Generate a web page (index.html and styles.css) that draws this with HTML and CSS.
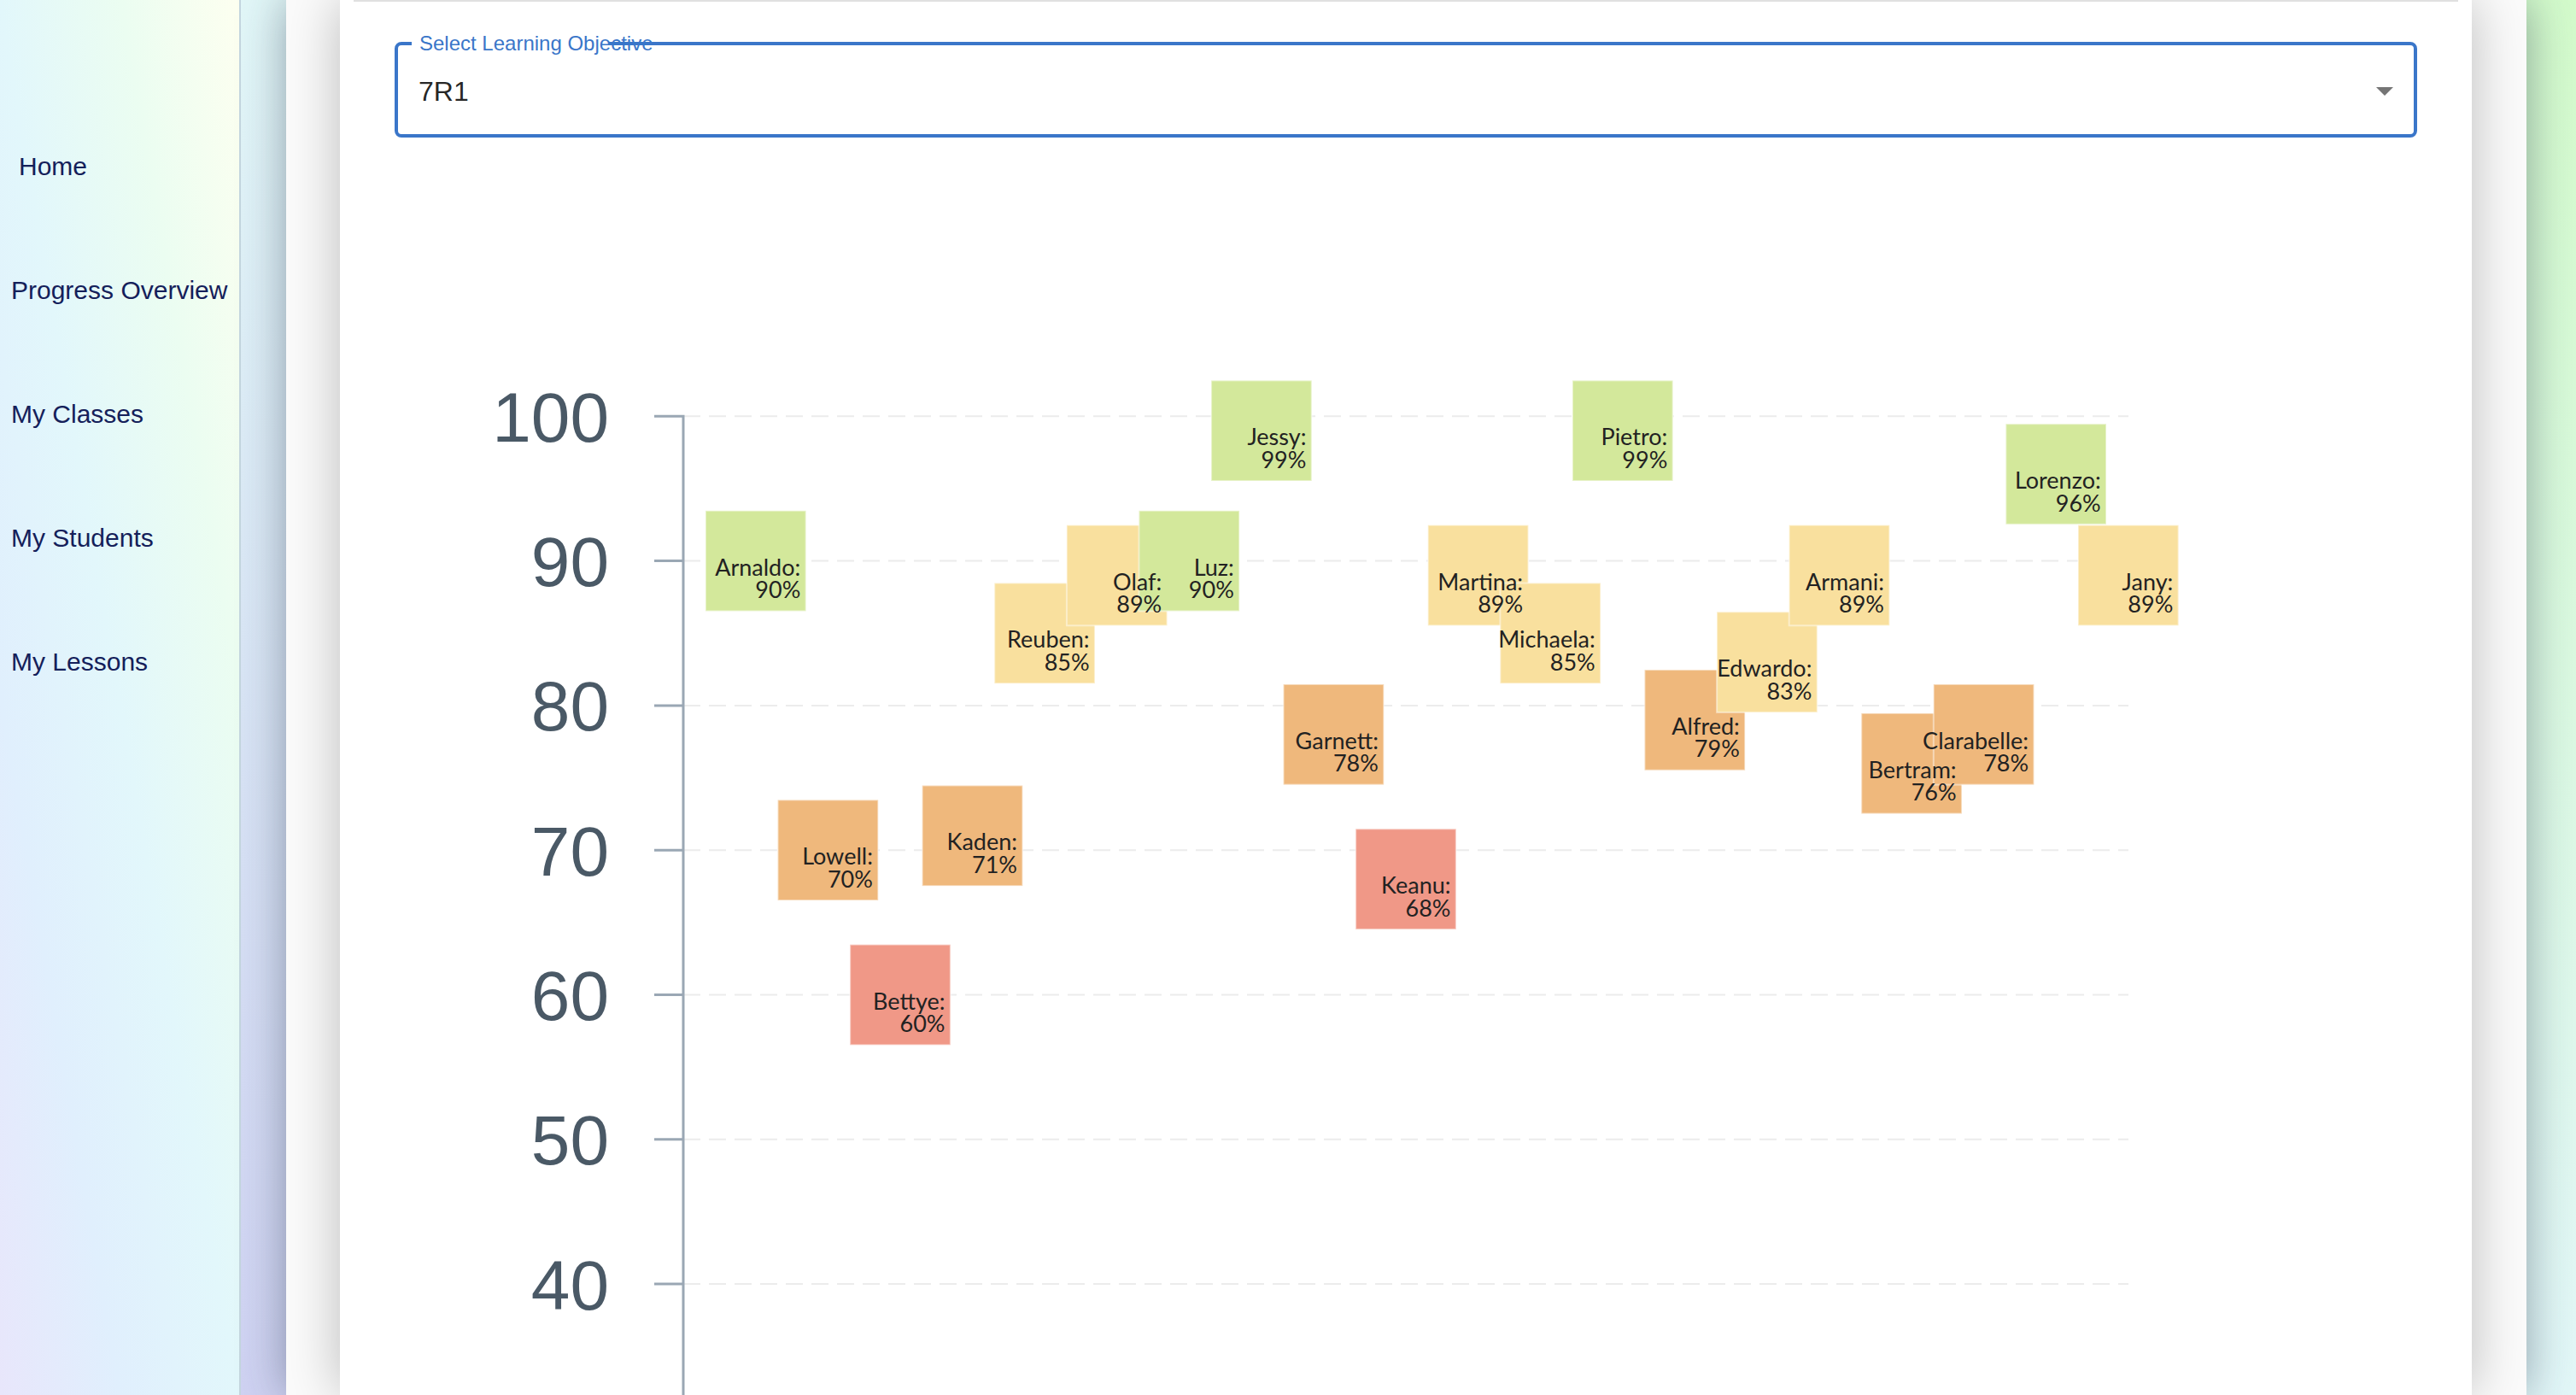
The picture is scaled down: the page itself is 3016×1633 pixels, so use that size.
FILE: index.html
```html
<!DOCTYPE html>
<html lang="en">
<head>
<meta charset="utf-8">
<title>Progress Overview</title>
<link rel="stylesheet" href="styles.css">
</head>
<body>
<div class="app">
  <aside class="sidebar">
    <nav class="nav">
      <a class="nav-item nav-home">Home</a>
      <a class="nav-item">Progress Overview</a>
      <a class="nav-item">My Classes</a>
      <a class="nav-item">My Students</a>
      <a class="nav-item">My Lessons</a>
    </nav>
  </aside>
  <main class="main">
    <div class="paper">
      <section class="card">
        <div class="divider"></div>
        <div class="select">
          <span class="notch"></span>
          <label class="select-label">Select Learning Objective</label>
          <div class="select-value">7R1</div>
          <svg class="select-arrow" viewBox="0 0 24 24" width="48" height="48"><path d="M7 10l5 5 5-5z"/></svg>
        </div>
        <div class="chart">
          <svg class="chart-svg" width="2496" height="1433" viewBox="398 200 2496 1433">
            <g class="grid">
              <line x1="800" x2="2492" y1="487.3" y2="487.3"/>
              <line x1="800" x2="2492" y1="656.6" y2="656.6"/>
              <line x1="800" x2="2492" y1="825.9" y2="825.9"/>
              <line x1="800" x2="2492" y1="995.2" y2="995.2"/>
              <line x1="800" x2="2492" y1="1164.5" y2="1164.5"/>
              <line x1="800" x2="2492" y1="1333.8" y2="1333.8"/>
              <line x1="800" x2="2492" y1="1503.1" y2="1503.1"/>
            </g>
            <g class="axis">
              <path class="axis-domain" d="M766,487.3H800V1640"/>
              <line x1="766" x2="800" y1="656.6" y2="656.6"/>
              <line x1="766" x2="800" y1="825.9" y2="825.9"/>
              <line x1="766" x2="800" y1="995.2" y2="995.2"/>
              <line x1="766" x2="800" y1="1164.5" y2="1164.5"/>
              <line x1="766" x2="800" y1="1333.8" y2="1333.8"/>
              <line x1="766" x2="800" y1="1503.1" y2="1503.1"/>
            </g>
            <g class="axis-labels">
              <text x="713" y="516.7">100</text>
              <text x="713" y="686">90</text>
              <text x="713" y="855.3">80</text>
              <text x="713" y="1024.6">70</text>
              <text x="713" y="1193.9">60</text>
              <text x="713" y="1363.2">50</text>
              <text x="713" y="1532.5">40</text>
            </g>
            <g class="boxes">
              <rect class="b-green" x="826" y="597.8" width="117.6" height="117.6"/>
              <rect class="b-orange" x="910.6" y="936.4" width="117.6" height="117.6"/>
              <rect class="b-red" x="995.2" y="1105.7" width="117.6" height="117.6"/>
              <rect class="b-orange" x="1079.7" y="919.5" width="117.6" height="117.6"/>
              <rect class="b-yellow" x="1164.3" y="682.5" width="117.6" height="117.6"/>
              <rect class="b-yellow" x="1248.9" y="614.7" width="117.6" height="117.6"/>
              <rect class="b-green" x="1333.5" y="597.8" width="117.6" height="117.6"/>
              <rect class="b-green" x="1418.1" y="445.4" width="117.6" height="117.6"/>
              <rect class="b-orange" x="1502.6" y="801" width="117.6" height="117.6"/>
              <rect class="b-red" x="1587.2" y="970.3" width="117.6" height="117.6"/>
              <rect class="b-yellow" x="1671.8" y="614.7" width="117.6" height="117.6"/>
              <rect class="b-yellow" x="1756.4" y="682.5" width="117.6" height="117.6"/>
              <rect class="b-green" x="1841" y="445.4" width="117.6" height="117.6"/>
              <rect class="b-orange" x="1925.5" y="784.1" width="117.6" height="117.6"/>
              <rect class="b-yellow" x="2010.1" y="716.3" width="117.6" height="117.6"/>
              <rect class="b-yellow" x="2094.7" y="614.7" width="117.6" height="117.6"/>
              <rect class="b-orange" x="2179.3" y="834.9" width="117.6" height="117.6"/>
              <rect class="b-orange" x="2263.8" y="801" width="117.6" height="117.6"/>
              <rect class="b-green" x="2348.4" y="496.2" width="117.6" height="117.6"/>
              <rect class="b-yellow" x="2433" y="614.7" width="117.6" height="117.6"/>
            </g>
            <g class="box-labels">
              <g transform="translate(884.8 656.6)"><text><tspan x="52.5" y="17">Arnaldo:</tspan><tspan x="52.5" y="43.5">90%</tspan></text></g>
              <g transform="translate(969.4 995.2)"><text><tspan x="52.5" y="17">Lowell:</tspan><tspan x="52.5" y="43.5">70%</tspan></text></g>
              <g transform="translate(1054 1164.5)"><text><tspan x="52.5" y="17">Bettye:</tspan><tspan x="52.5" y="43.5">60%</tspan></text></g>
              <g transform="translate(1138.5 978.3)"><text><tspan x="52.5" y="17">Kaden:</tspan><tspan x="52.5" y="43.5">71%</tspan></text></g>
              <g transform="translate(1223.1 741.3)"><text><tspan x="52.5" y="17">Reuben:</tspan><tspan x="52.5" y="43.5">85%</tspan></text></g>
              <g transform="translate(1307.7 673.5)"><text><tspan x="52.5" y="17">Olaf:</tspan><tspan x="52.5" y="43.5">89%</tspan></text></g>
              <g transform="translate(1392.3 656.6)"><text><tspan x="52.5" y="17">Luz:</tspan><tspan x="52.5" y="43.5">90%</tspan></text></g>
              <g transform="translate(1476.9 504.2)"><text><tspan x="52.5" y="17">Jessy:</tspan><tspan x="52.5" y="43.5">99%</tspan></text></g>
              <g transform="translate(1561.4 859.8)"><text><tspan x="52.5" y="17">Garnett:</tspan><tspan x="52.5" y="43.5">78%</tspan></text></g>
              <g transform="translate(1646 1029.1)"><text><tspan x="52.5" y="17">Keanu:</tspan><tspan x="52.5" y="43.5">68%</tspan></text></g>
              <g transform="translate(1730.6 673.5)"><text><tspan x="52.5" y="17">Martina:</tspan><tspan x="52.5" y="43.5">89%</tspan></text></g>
              <g transform="translate(1815.2 741.3)"><text><tspan x="52.5" y="17">Michaela:</tspan><tspan x="52.5" y="43.5">85%</tspan></text></g>
              <g transform="translate(1899.8 504.2)"><text><tspan x="52.5" y="17">Pietro:</tspan><tspan x="52.5" y="43.5">99%</tspan></text></g>
              <g transform="translate(1984.3 842.9)"><text><tspan x="52.5" y="17">Alfred:</tspan><tspan x="52.5" y="43.5">79%</tspan></text></g>
              <g transform="translate(2068.9 775.1)"><text><tspan x="52.5" y="17">Edwardo:</tspan><tspan x="52.5" y="43.5">83%</tspan></text></g>
              <g transform="translate(2153.5 673.5)"><text><tspan x="52.5" y="17">Armani:</tspan><tspan x="52.5" y="43.5">89%</tspan></text></g>
              <g transform="translate(2238.1 893.7)"><text><tspan x="52.5" y="17">Bertram:</tspan><tspan x="52.5" y="43.5">76%</tspan></text></g>
              <g transform="translate(2322.6 859.8)"><text><tspan x="52.5" y="17">Clarabelle:</tspan><tspan x="52.5" y="43.5">78%</tspan></text></g>
              <g transform="translate(2407.2 555)"><text><tspan x="52.5" y="17">Lorenzo:</tspan><tspan x="52.5" y="43.5">96%</tspan></text></g>
              <g transform="translate(2491.8 673.5)"><text><tspan x="52.5" y="17">Jany:</tspan><tspan x="52.5" y="43.5">89%</tspan></text></g>
            </g>
          </svg>
        </div>
      </section>
    </div>
  </main>
</div>
</body>
</html>
```
FILE: styles.css
```css
html, body {
  margin: 0;
  padding: 0;
  height: 100%;
  overflow: hidden;
}

body {
  font-family: "Liberation Sans", Arial, sans-serif;
}

.app {
  display: flex;
  height: 100vh;
  overflow: hidden;
}

.sidebar {
  flex: 0 0 280px;
  width: 280px;
  border-right: 2px solid #c4d6df;
  background: linear-gradient(to top right, #e8e6fb 0%, #e0effd 25%, #e2f7fb 50%, #ebfdf1 75%, #fdfff0 100%);
}

.nav {
  display: flex;
  flex-direction: column;
  gap: 105px;
  padding-top: 175px;
}

.nav-item {
  display: block;
  padding-left: 13px;
  font-size: 30px;
  line-height: 40px;
  color: #14205a;
  white-space: nowrap;
  text-decoration: none;
}

.nav-home {
  padding-left: 22px;
}

.main {
  flex: 1;
  display: flex;
  padding: 0 58px 0 53px;
  background: linear-gradient(to bottom left, #d3fbcb 0%, #e2f7f8 50%, #cfd2f2 100%);
  min-width: 0;
}

.paper {
  flex: 1;
  display: flex;
  padding: 0 64px 0 63px;
  background: #fbfbfb;
  box-shadow: 0 0 50px rgba(30, 45, 70, 0.42);
  min-width: 0;
}

.card {
  flex: 1;
  background: #ffffff;
  box-shadow: 0 0 60px rgba(0, 0, 0, 0.26);
  overflow: hidden;
  min-width: 0;
}

.divider {
  height: 2px;
  margin: 0 16px;
  background: #e0e0e0;
}

.select {
  position: relative;
  box-sizing: border-box;
  height: 112px;
  margin: 47px 64px 0;
  border: 4px solid #3a76c9;
  border-radius: 8px;
  display: flex;
  align-items: center;
  padding: 3px 0 0 24px;
}

.notch {
  position: absolute;
  top: -4px;
  left: 16px;
  width: 231px;
  height: 4px;
  background: #ffffff;
}

.select-label {
  position: absolute;
  top: -14.5px;
  left: 25px;
  font-size: 24px;
  line-height: 24px;
  color: #3a76c9;
  white-space: nowrap;
}

.select-value {
  font-size: 32px;
  line-height: 32px;
  color: rgba(0, 0, 0, 0.87);
}

.select-arrow {
  position: absolute;
  right: 10px;
  top: 29px;
  fill: #757575;
}

.chart {
  margin-top: 39px;
}

.chart-svg {
  display: block;
}

.grid line {
  stroke: #ececec;
  stroke-width: 2;
  stroke-dasharray: 20 10;
}

.axis line,
.axis-domain {
  stroke: #9aa7b4;
  stroke-width: 3;
  fill: none;
}

.axis-labels text {
  font-family: "Liberation Sans", Arial, sans-serif;
  font-size: 82px;
  fill: #4a5966;
  text-anchor: end;
}

.boxes rect {
  stroke: rgba(255, 255, 255, 0.45);
  stroke-width: 2;
}

.b-green { fill: #d3e89b; }
.b-yellow { fill: #f9e09e; }
.b-orange { fill: #efb87c; }
.b-red { fill: #f09887; }

.box-labels text {
  font-family: Lato, "Open Sans", sans-serif;
  font-size: 27px;
  fill: #222222;
  text-anchor: end;
}
```
